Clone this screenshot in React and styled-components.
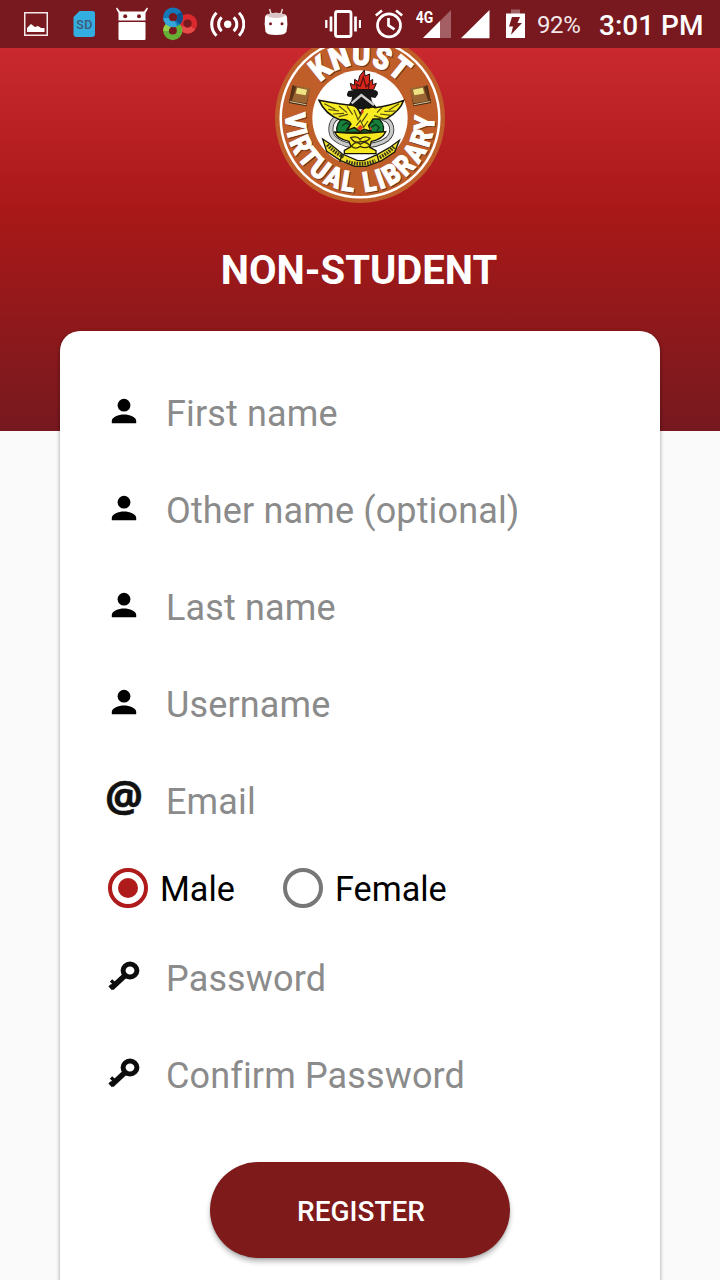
import React from "react";
import styled, { createGlobalStyle } from "styled-components";

const GlobalStyle = createGlobalStyle`
  * { box-sizing: border-box; }
  html, body { margin: 0; padding: 0; background: #fafafa; }
  body { font-family: Roboto, sans-serif; overflow: hidden; }
`;

const Screen = styled.div`
  width: 720px;
  height: 1280px;
  overflow: hidden;
  background: #fafafa;
  display: flex;
  flex-direction: column;
`;

const StatusBar = styled.header`
  flex: none;
  height: 48px;
  padding: 0 17px 0 24px;
  display: flex;
  align-items: center;
  justify-content: space-between;
  background: #78191f;
  color: #fff;
`;

const StatusGroup = styled.div`
  display: flex;
  align-items: center;
  height: 48px;
`;

const StatusIcon = styled.svg`
  display: block;
  flex: none;
  width: ${(p) => p.$w}px;
  height: 48px;
  margin-right: ${(p) => p.$gap || 0}px;
`;

const BatteryLevel = styled.span`
  width: 62px;
  font-size: 24px;
  line-height: 48px;
  padding-top: 1px;
  letter-spacing: -0.4px;
  color: #f3e8e9;
  white-space: nowrap;
`;

const Clock = styled.span`
  width: 104px;
  font-size: 28px;
  font-weight: 500;
  line-height: 48px;
  padding-top: 3px;
  white-space: nowrap;
`;

const Banner = styled.section`
  flex: none;
  height: 383px;
  overflow: hidden;
  display: flex;
  flex-direction: column;
  align-items: center;
  background: linear-gradient(#c9292f 0%, #a91818 43%, #76191f 100%);
`;

const Logo = styled.svg`
  display: block;
  flex: none;
  width: 170px;
  height: 170px;
  margin-top: -15px;
`;

const Title = styled.h1`
  margin: 44px 2px 0 0;
  font-size: 40px;
  line-height: 48px;
  font-weight: 700;
  color: #fff;
  white-space: nowrap;
`;

const Card = styled.main`
  position: relative;
  flex: none;
  width: 600px;
  height: 1040px;
  margin: -100px auto 0;
  padding-top: 34px;
  border-radius: 20px;
  background: #fff;
  box-shadow: 0 2px 4px rgba(0, 0, 0, 0.3), 0 0 3px rgba(0, 0, 0, 0.12);
`;

const FieldRow = styled.label`
  display: flex;
  align-items: center;
  gap: 24px;
  height: 97px;
  padding-left: 46px;
`;

const FieldIcon = styled.svg`
  display: block;
  flex: none;
  width: 36px;
  height: 36px;
  margin-bottom: 5px;
  overflow: visible;
`;

const Placeholder = styled.span`
  font-size: 36px;
  line-height: 48px;
  letter-spacing: 0.14px;
  color: #8b8b8b;
  white-space: nowrap;
`;

const RadioRow = styled.div`
  display: flex;
  align-items: center;
  height: 80px;
  padding: 0 0 4px 48px;
`;

const RadioOption = styled.label`
  display: flex;
  align-items: center;
  gap: 12px;
  width: 175px;
`;

const RadioDot = styled.span`
  display: flex;
  align-items: center;
  justify-content: center;
  flex: none;
  width: 40px;
  height: 40px;
  border-radius: 50%;
  border: 4px solid ${(p) => (p.$on ? "#af1a1b" : "#777")};

  &::after {
    content: "";
    width: 20px;
    height: 20px;
    border-radius: 50%;
    background: ${(p) => (p.$on ? "#af1a1b" : "transparent")};
  }
`;

const RadioLabel = styled.span`
  font-size: 34.2px;
  line-height: 40px;
  padding-top: 1px;
  color: #000;
`;

const RegisterButton = styled.button`
  display: block;
  width: 300px;
  height: 96px;
  margin: 38px auto 0;
  padding: 2px 0 0 2px;
  border: 0;
  border-radius: 48px;
  background: #7e1a1a;
  color: #fff;
  font: 500 28px Roboto, sans-serif;
  box-shadow: 0 4px 5px rgba(0, 0, 0, 0.25), 0 1px 2px rgba(0, 0, 0, 0.14);
`;

const PersonIcon = () => (
  <FieldIcon viewBox="0 0 36 36">
    <circle cx="18" cy="12.200" r="6.400" />
    <path d="M5.800 30.200v-2.400c0-3.800 6.700-6.300 12.200-6.300s12.200 2.500 12.200 6.300v2.400Z" />
  </FieldIcon>
);

const AtIcon = () => (
  <FieldIcon viewBox="0 0 36 36">
    <text x="-1" y="31.300" textLength="38" lengthAdjust="spacingAndGlyphs"
      fontFamily="Open Sans, sans-serif" fontWeight="700" fontSize="43.500" fill="#111" stroke="#111" strokeWidth="0.5">@</text>
  </FieldIcon>
);

const KeyIcon = () => (
  <FieldIcon viewBox="0 0 36 36">
    <ellipse cx="24" cy="12.500" rx="6.900" ry="6.400" fill="none" stroke="#0c0c0c" strokeWidth="5" />
    <path d="M19 17.500 5.500 30" stroke="#0c0c0c" strokeWidth="5.600" />
    <path d="m10.500 27.500-5.500-5M7.200 31l-3.600-3.600" stroke="#0c0c0c" strokeWidth="3.400" />
  </FieldIcon>
);

const icons = { person: PersonIcon, at: AtIcon, key: KeyIcon };

function Field({ icon, children }) {
  const Icon = icons[icon];
  return (
    <FieldRow>
      <Icon />
      <Placeholder>{children}</Placeholder>
    </FieldRow>
  );
}

function Book({ x, y, turn, flip }) {
  return (
    <g transform={`translate(${x} ${y}) rotate(${turn}) scale(${flip ? -1.15 : 1.15} 1.15)`}>
      <path d="M-20-24 26-20 23 26-24 23Z" fill="#432713" />
      <path d="M-15-24 27-22 22 19-22 17Z" fill="#9b6533" />
      <path d="M-16-22-9-23-17 18-24 17Z" fill="#5b3418" />
      <path d="M-22 19 22 22" stroke="#d9c49b" strokeWidth="3" />
      <path d="M-7-19 19-17 17-2-9-4Z" fill="#efe283" />
    </g>
  );
}

function LibraryLogo() {
  return (
    <Logo viewBox="30 -21 510 510">
      <defs>
        <path id="arcTop" d="M126 234A159 159 0 0 1 444 234" />
        <path id="arcBottom" d="M62.600 217A223 223 0 1 0 507.400 217" />
      </defs>
      <circle cx="285" cy="234" r="255" fill="#c05e29" />
      <circle cx="285" cy="234" r="238" fill="none" stroke="#fff" strokeWidth="7.500" />
      <circle cx="285" cy="234" r="143" fill="#fff" />
      {[["#713315", 3], ["#fff", 0]].map(([fill, d]) => (
        <g key={fill} transform={`translate(${d} ${d})`} fill={fill} stroke={fill} strokeWidth="3"
          fontFamily="Roboto, sans-serif" fontWeight="900" aria-hidden={d > 0}>
          <text fontSize="94">
            <textPath href="#arcTop" startOffset="50%" textAnchor="middle" textLength="268" lengthAdjust="spacingAndGlyphs">KNUST</textPath>
          </text>
          <text fontSize="84" letterSpacing="9">
            <textPath href="#arcBottom" startOffset="50%" textAnchor="middle" textLength="726" lengthAdjust="spacingAndGlyphs">VIRTUAL LIBRARY</textPath>
          </text>
        </g>
      ))}
      <Book x={102} y={166} turn={7} />
      <Book x={468} y={166} turn={-7} flip />

      <path d="M218 232C193 244 190 285 214 299Q235 317 285 318Q343 317 367 297C390 276 382 242 353 235" fill="none" stroke="#333" strokeWidth="15" />
      <path d="M218 232C193 244 190 285 214 299Q235 317 285 318Q343 317 367 297C390 276 382 242 353 235" fill="none" stroke="#c9cbc9" strokeWidth="10" />

      <path d="M250 153Q285 144 332 151Q347 158 331 174L318 172 321 184 339 208H242L259 182 261 170Q238 174 250 153Z" fill="#171717" />
      <path d="M260 190 289 165 327 195" fill="none" stroke="#cfcfcf" strokeWidth="7" />
      <path d="M260 148 256 130 268 136 269 118 280 125 284 108 298 90 300 108 314 102 313 125 323 118 323 134 334 130 326 149Z" fill="#da261b" stroke="#1b1110" strokeWidth="3" />
      <path d="M277 147 274 133 286 139 295 112 303 141 313 130 310 148" fill="none" stroke="#581311" strokeWidth="4" />

      <path d="M216 277Q211 248 237 233L333 231Q361 247 355 276Z" fill="#16813b" stroke="#102512" strokeWidth="4" />
      <path d="m231 258 13-10 12 9-11 11M319 262l13-9 11 10-8 10M306 250l10-7 10 5" fill="none" stroke="#103b1b" strokeWidth="4" />
      <path d="M209 276Q285 284 362 275Q352 298 319 304L314 322 333 332V341H238V331L258 320 252 304Q217 297 209 276Z" fill="#f5e81f" stroke="#181505" strokeWidth="4" />
      <path d="M257 293q20-7 28 5 13-13 30-3-12 14-28 9-18 9-30-11Zm2 25q15-18 27-5 15-13 29 4-14 11-29 2-15 11-27-1Z" fill="none" stroke="#332d0c" strokeWidth="4" />

      <path d="M162 181Q232 194 261 196Q277 198 286 222Q294 199 311 204Q322 198 330 203Q376 197 416 181Q406 212 365 236L324 237 311 257 318 274 297 268 285 274 268 263 246 271 258 252Q250 237 224 239Q180 222 162 181Z" fill="#f8ec22" stroke="#17150a" strokeWidth="4.500" />
      <path d="m178 191 33 17m-21 0 32 5m-18 9 33-2m-16 10 28-7M222 198l24 20m0-19 17 25M402 191l-30 19m20 3-34 1m20 12-33-4m11 14-29-9M352 201l-16 17M267 209l12 30 15-25m-3 31 17-25m-34 37 12-16 10 21 13-19" fill="none" stroke="#544b14" strokeWidth="3.500" />
      <path d="m288 212 6-4 2 8-5 7Zm-12 52 10-10 8 8-8 12Zm38-6 7 9-6 3Z" fill="#e33b20" />

      <path d="m173 297 23 15 36 30 46 20h18l40-18 37-21 30-22-14 35-39 26-46 17h-35l-42-17-42-28Z" fill="#f4e42d" stroke="#1a190b" strokeWidth="4" />
      <path d="m232 342-8 24m112-22 6 20" stroke="#1a190b" strokeWidth="4" />
      <path d="M187 314q26 28 51 37m5 13q44 16 88-2m13-10q29-14 44-33" fill="none" stroke="#38351c" strokeWidth="11" strokeDasharray="5 3" />
    </Logo>
  );
}

function NotificationIcons() {
  return (
    <StatusGroup>
      <StatusIcon $w={24} $gap={25} viewBox="24 0 24 48">
        <rect x="24.750" y="12.750" width="22.500" height="22.500" fill="none" stroke="#f4e8e9" strokeWidth="1.500" />
        <path d="M27 32v-4l4-4 4 3 3-1 3 2h3.500v4Z" fill="#fff" />
      </StatusIcon>
      <StatusIcon $w={23} $gap={20} viewBox="73 0 23 48">
        <path d="M79.500 11H92.500a2.500 2.500 0 0 1 2.500 2.500V34a3 3 0 0 1-3 3H76.500a3 3 0 0 1-3-3V17Z" fill="#32aee0" />
        <text x="76.300" y="28.600" fontFamily="Roboto, sans-serif" fontWeight="500" fontSize="12.500" textLength="16" fill="#405774">SD</text>
      </StatusIcon>
      <StatusIcon $w={32} $gap={15} viewBox="116 0 32 48" fill="#fff">
        <path d="m116 8.500 1-1 3 4h24l3-4 1 1-2.500 4.500v7.500h-27V13Z" />
        <rect x="118.500" y="22" width="27" height="18" rx="1" />
        <circle cx="125.200" cy="16.200" r="2" fill="#78191f" />
        <circle cx="139" cy="16.200" r="2" fill="#78191f" />
      </StatusIcon>
      <StatusIcon $w={34} $gap={13} viewBox="163 0 34 48" fill="none" strokeWidth="5.600">
        <circle cx="187.500" cy="23.700" r="6.900" stroke="#d9292f" />
        <path d="M181.500 27a6.900 6.900 0 0 0 11.500 1" stroke="#e84a48" />
        <circle cx="172.800" cy="30.500" r="6.900" stroke="#67b036" />
        <path d="M166 31a6.900 6.900 0 0 1 8-7" stroke="#96cf48" />
        <circle cx="173" cy="17.300" r="7.100" stroke="#1478b8" />
        <path d="M166 18a7.200 7.200 0 0 0 10 5.700" stroke="#36a6da" />
        <path d="M179 13.500a7.200 7.200 0 0 1-1 9" stroke="#0e4f90" />
      </StatusIcon>
      <StatusIcon $w={35} $gap={19} viewBox="210 0 35 48" fill="none" stroke="#fff" strokeWidth="3">
        <circle cx="227.700" cy="24.200" r="3.700" fill="#fff" stroke="none" />
        <path d="M221.700 17.300a9.200 9.200 0 0 0 0 13.800M233.700 17.300a9.200 9.200 0 0 1 0 13.800M216.500 12.700a16.200 16.200 0 0 0 0 23M239 12.700a16.200 16.200 0 0 1 0 23" />
      </StatusIcon>
      <StatusIcon $w={24} viewBox="264 0 24 48">
        <path d="m269.500 9 1.700 5M282.500 9l-1.700 5" stroke="#e7d7d8" strokeWidth="1.500" />
        <path d="M266 15q10-4.500 20 0l1 2q1 8-.5 14.500-1 3.500-10.500 3.500t-10.500-3.500q-1.500-7-.5-14.500Z" fill="#fff" />
        <path d="M266 15q10-4.500 20 0-3 3-10 3t-10-3Z" fill="#dac3c5" />
        <circle cx="270.500" cy="23.800" r="1.500" fill="#78191f" />
        <circle cx="282" cy="23.800" r="1.500" fill="#78191f" />
      </StatusIcon>
    </StatusGroup>
  );
}

function SystemIcons() {
  return (
    <StatusGroup>
      <StatusIcon $w={36} $gap={14} viewBox="325 0 36 48" fill="none" stroke="#fff">
        <rect x="335.500" y="11.500" width="15.500" height="25" rx="2" strokeWidth="2.800" />
        <path d="M331 16.500v15M355.500 16.500v15" strokeWidth="2.700" />
        <path d="M326.300 20v8M360 20v8" strokeWidth="2.300" />
      </StatusIcon>
      <StatusIcon $w={28} $gap={13} viewBox="375 0 28 48" fill="none" stroke="#fff" strokeWidth="2.700">
        <circle cx="389" cy="25.400" r="11.500" />
        <path d="M375.800 15.500 382 10.500M402.200 15.500 396 10.500M388.500 18v7.500l6 3.800" />
      </StatusIcon>
      <StatusIcon $w={36} $gap={9} viewBox="416 0 36 48">
        <text x="415.800" y="22.600" fontFamily="Roboto, sans-serif" fontWeight="700" fontSize="16" textLength="17.500" lengthAdjust="spacingAndGlyphs" fill="#fff">4G</text>
        <path d="M451 10v28h-28Z" fill="#a45f64" />
        <path d="M440 21v17h-17Z" fill="#fff" />
      </StatusIcon>
      <StatusIcon $w={29} $gap={16} viewBox="461 0 29 48"><path d="M489.500 10v28.200H461Z" fill="#fff" /></StatusIcon>
      <StatusIcon $w={19} $gap={12} viewBox="506 0 19 48">
        <path d="M511 9.500h9V14h-9Z" fill="#a26064" />
        <path d="M506 13.500h19V38h-19Z" fill="#fff" />
        <path d="m512 17h8l-2.500 6h4.500L511 34.800l2-8.300h-4Z" fill="#78191f" />
      </StatusIcon>
      <BatteryLevel>92%</BatteryLevel>
      <Clock>3:01 PM</Clock>
    </StatusGroup>
  );
}

export default function App() {
  return (
    <Screen>
      <GlobalStyle />
      <StatusBar>
        <NotificationIcons />
        <SystemIcons />
      </StatusBar>
      <Banner>
        <LibraryLogo />
        <Title>NON-STUDENT</Title>
      </Banner>
      <Card>
        <Field icon="person">First name</Field>
        <Field icon="person">Other name (optional)</Field>
        <Field icon="person">Last name</Field>
        <Field icon="person">Username</Field>
        <Field icon="at">Email</Field>
        <RadioRow>
          <RadioOption><RadioDot $on /><RadioLabel>Male</RadioLabel></RadioOption>
          <RadioOption><RadioDot /><RadioLabel>Female</RadioLabel></RadioOption>
        </RadioRow>
        <Field icon="key">Password</Field>
        <Field icon="key">Confirm Password</Field>
        <RegisterButton>REGISTER</RegisterButton>
      </Card>
    </Screen>
  );
}
